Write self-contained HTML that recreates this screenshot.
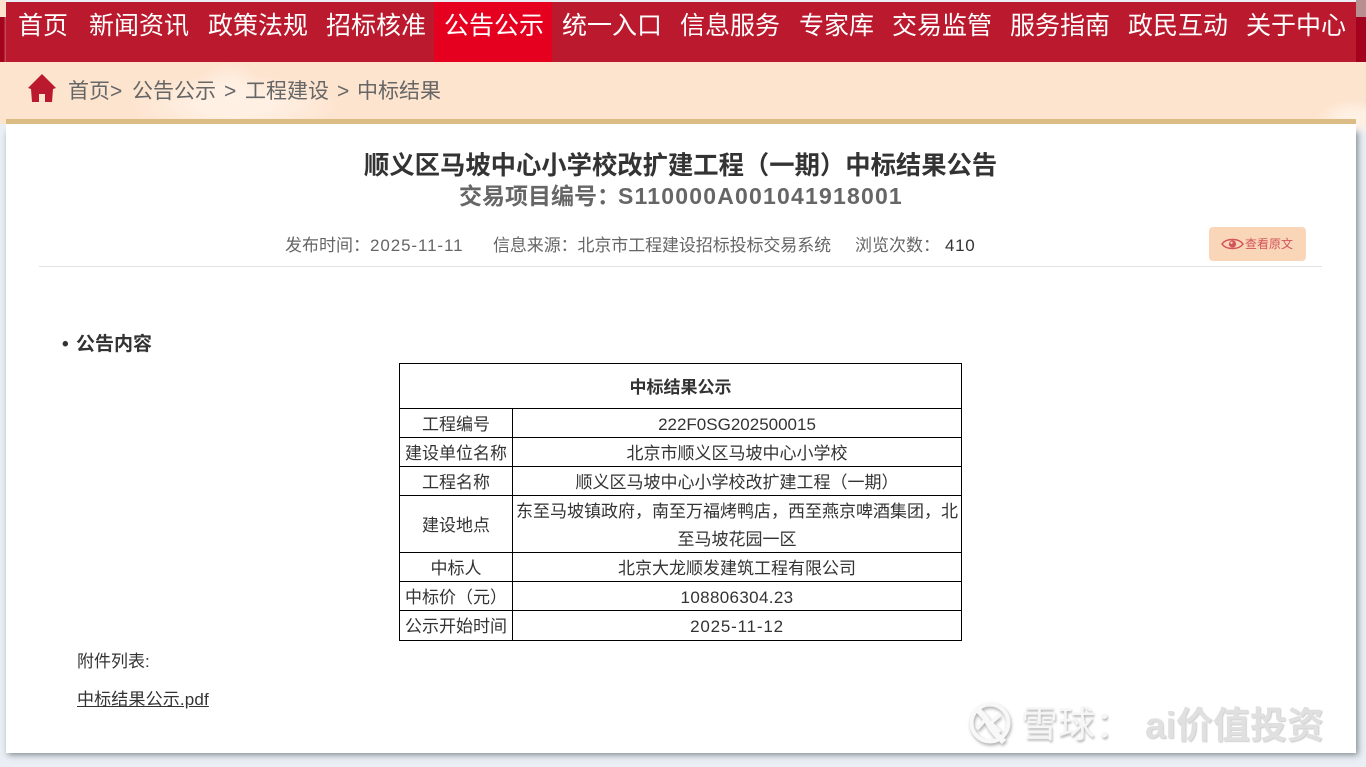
<!DOCTYPE html>
<html lang="zh-CN"><head><meta charset="utf-8"><title>中标结果</title>
<style>
*{margin:0;padding:0;box-sizing:border-box}
html,body{width:1366px;height:767px;overflow:hidden;background:#e9eff4;font-family:"Liberation Sans","Noto Sans CJK SC",sans-serif;color:#333}
.a{position:absolute;white-space:nowrap}
.band{left:0;top:62px;width:1366px;height:62px;background:#fde4cf}
.cloud{border-radius:50%;background:radial-gradient(closest-side,#fff1e5 0,#fff0e3 35%,rgba(255,240,227,0) 100%)}
.cl{left:0;top:0;width:6px;height:17px;background:#fde3cd}
.cr{left:1356px;top:0;width:10px;height:17px;background:#b98f92}
.dl{left:0;top:17px;width:6px;height:45px;background:linear-gradient(90deg,#a3031d,#a3031d 60%,#c95a62)}
.dr{left:1356px;top:17px;width:10px;height:45px;background:#a3031d}
.nav{left:6px;top:2px;width:1350px;height:60px;background:#bb1a2e}
.on{left:434px;top:2px;width:118px;height:60px;background:#e60020}
.n{top:8px;font-size:25px;line-height:37px;color:#fff}
.bc{top:76px;font-size:21px;line-height:31px;color:#666}
.shadow{left:6px;top:130px;width:1350px;height:623px;box-shadow:2px 2px 6px rgba(60,70,80,.6)}
.panel{left:6px;top:119px;width:1350px;height:634px;background:#fff;border-top:5px solid #dcbc85}
table{position:absolute;left:399px;top:363px;width:563px;border-collapse:collapse;table-layout:fixed;font-size:17px;color:#333}
td{border:1px solid #000;text-align:center;line-height:28px;height:29px;padding:0 2px;overflow:hidden}
td span{position:relative;top:2px}
.wm{font-weight:bold;color:#f6f6f6;text-shadow:1px 2px 2px #b5b5b5}
</style></head><body>
<div class="a cl"></div><div class="a cr"></div><div class="a dl"></div><div class="a dr"></div>
<div class="a band"></div>
<div class="a cloud" style="left:130px;top:75px;width:210px;height:60px"></div>
<div class="a cloud" style="left:195px;top:62px;width:70px;height:70px"></div>
<div class="a cloud" style="left:1316px;top:100px;width:80px;height:36px"></div>
<div class="a nav"></div><div class="a on"></div>
<div class="a n" style="left:18px">首页</div>
<div class="a n" style="left:89px">新闻资讯</div>
<div class="a n" style="left:208px">政策法规</div>
<div class="a n" style="left:326px">招标核准</div>
<div class="a n" style="left:444px">公告公示</div>
<div class="a n" style="left:562px">统一入口</div>
<div class="a n" style="left:680px">信息服务</div>
<div class="a n" style="left:799px">专家库</div>
<div class="a n" style="left:892px">交易监管</div>
<div class="a n" style="left:1010px">服务指南</div>
<div class="a n" style="left:1128px">政民互动</div>
<div class="a n" style="left:1246px">关于中心</div>

<svg class="a" style="left:27px;top:74px" width="30" height="30" viewBox="0 0 30 30"><path d="M15 0 L29 14 L26 15 L25 28 L18 28 L18 20 L12 20 L12 28 L5 28 L4 15 L1 14 Z" fill="#bb1a2e"/></svg>
<div class="a bc" style="left:68px">首页&gt;</div>
<div class="a bc" style="left:132px">公告公示</div>
<div class="a bc" style="left:224px">&gt;</div>
<div class="a bc" style="left:245px">工程建设</div>
<div class="a bc" style="left:337px">&gt;</div>
<div class="a bc" style="left:357px">中标结果</div>

<div class="a shadow"></div>
<div class="a panel"></div>
<div class="a" style="left:364px;top:148px;font-size:25.33px;line-height:37px;font-weight:bold;color:#333">顺义区马坡中心小学校改扩建工程（一期）中标结果公告</div>
<div class="a" style="left:459px;top:179px;font-size:23px;line-height:34px;font-weight:bold;color:#666">交易项目编号：<span style="letter-spacing:1.2px;margin-left:-2px">S110000A001041918001</span></div>
<div class="a" style="left:285px;top:233px;font-size:17px;line-height:26px;color:#666">发布时间：<span style="letter-spacing:.9px">2025-11-11</span></div>
<div class="a" style="left:493px;top:233px;font-size:17px;line-height:26px;color:#666;letter-spacing:-.1px">信息来源：北京市工程建设招标投标交易系统</div>
<div class="a" style="left:855px;top:233px;font-size:17px;line-height:26px;color:#666">浏览次数：</div>
<div class="a" style="left:945px;top:233px;font-size:17px;line-height:26px;color:#333;letter-spacing:.7px">410</div>
<div class="a" style="left:1209px;top:227px;width:97px;height:34px;background:#fad6b8;border-radius:4px"></div>
<svg class="a" style="left:1221px;top:236px" width="23" height="16" viewBox="0 0 23 16"><path d="M1 8 C5 2 18 2 22 8 C18 14 5 14 1 8 Z" fill="none" stroke="#d2545a" stroke-width="1.5"/><circle cx="11.5" cy="8" r="3.6" fill="#d2545a"/><circle cx="10.5" cy="6.8" r="1.2" fill="#fad6b8"/></svg>
<div class="a" style="left:1245px;top:235px;font-size:12px;line-height:18px;color:#d2545a">查看原文</div>
<div class="a" style="left:39px;top:266px;width:1283px;height:1px;background:#e2e2e2"></div>

<div class="a" style="left:62px;top:331px;font-size:19px;line-height:28px;font-weight:bold;color:#333">•</div>
<div class="a" style="left:76px;top:331px;font-size:19px;line-height:28px;font-weight:bold;color:#333">公告内容</div>

<table>
<colgroup><col style="width:113px"><col></colgroup>
<tr><td colspan="2" style="height:45px;font-weight:bold"><span>中标结果公示</span></td></tr>
<tr><td><span>工程编号</span></td><td><span>222F0SG202500015</span></td></tr>
<tr><td><span>建设单位名称</span></td><td><span>北京市顺义区马坡中心小学校</span></td></tr>
<tr><td><span>工程名称</span></td><td><span>顺义区马坡中心小学校改扩建工程（一期）</span></td></tr>
<tr><td style="height:57px"><span>建设地点</span></td><td><span>东至马坡镇政府，南至万福烤鸭店，西至燕京啤酒集团，北至马坡花园一区</span></td></tr>
<tr><td><span>中标人</span></td><td><span>北京大龙顺发建筑工程有限公司</span></td></tr>
<tr><td><span>中标价（元）</span></td><td><span style="letter-spacing:.35px">108806304.23</span></td></tr>
<tr><td style="height:30px"><span style="top:1px">公示开始时间</span></td><td><span style="top:1px;letter-spacing:.8px">2025-11-12</span></td></tr>
</table>

<div class="a" style="left:77px;top:650px;font-size:17px;line-height:24px;color:#333">附件列表:</div>
<div class="a" style="left:77px;top:687px;font-size:17px;line-height:25px;color:#333;text-decoration:underline;letter-spacing:.15px">中标结果公示.pdf</div>

<svg class="a" style="left:964px;top:696px;filter:drop-shadow(1px 2px 1.5px #aaa)" width="54" height="54" viewBox="0 0 54 54"><circle cx="26" cy="27" r="18.5" fill="none" stroke="#f8f8f8" stroke-width="4"/><path d="M12 12 C20 20 22 22 26 30 C30 37 36 42 40 46" fill="none" stroke="#f8f8f8" stroke-width="6"/><path d="M36 19 L27 27 L36 36" fill="none" stroke="#f8f8f8" stroke-width="3.5"/><path d="M13 33 L22 23" fill="none" stroke="#f8f8f8" stroke-width="3.5"/></svg>
<div class="a wm" style="left:1021px;top:700px;font-size:37px;line-height:50px;font-weight:normal">雪球：</div>
<div class="a wm" style="left:1145px;top:703px;font-size:37px;line-height:46px;color:#e0e0e0;text-shadow:1px 1px 1px #d0d0d0">ai价值投资</div>
</body></html>
